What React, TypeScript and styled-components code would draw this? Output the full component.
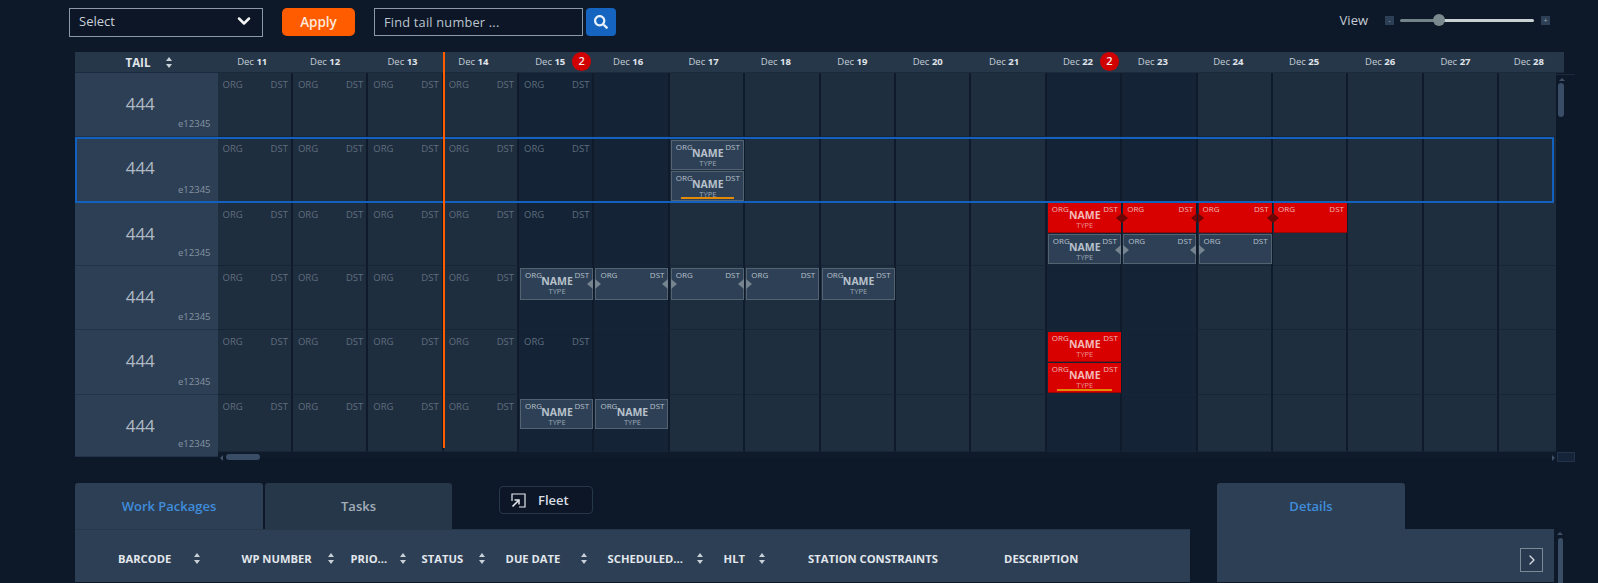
import React from "react";
import styled, { createGlobalStyle } from "styled-components";
import { ChevronDown, ChevronRight } from "lucide-react";
import { FaSearch } from "react-icons/fa";

const GlobalStyle = createGlobalStyle`
    html, body {
        margin: 0;
        padding: 0;
        background: #0d1829;
        overflow: hidden;
    }
    * {
        box-sizing: border-box;
    }
`;

const Page = styled.div`
    width: 1598px;
    height: 583px;
    overflow: hidden;
    background: #0d1829;
    font-family: "Open Sans", "Noto Sans", sans-serif;
    color: #e4e9ee;
`;

const TopBar = styled.div`
    display: flex;
    align-items: flex-start;
    height: 29px;
    margin-top: 8px;
    padding-left: 69px;
`;

const SelectBox = styled.div`
    width: 194px;
    height: 29px;
    display: flex;
    align-items: center;
    justify-content: space-between;
    padding: 0 8px 3px 9px;
    border: 1px solid #8b98a5;
    background: #0c1626;
    font-size: 13px;
    color: #c8d0d8;
`;

const ApplyButton = styled.button`
    width: 73px;
    height: 28px;
    margin-left: 19px;
    border: none;
    border-radius: 5px;
    background: #ff5c00;
    color: #ffe9dc;
    font-family: inherit;
    font-size: 13.5px;
    font-weight: 600;
`;

const SearchInput = styled.div`
    width: 209px;
    height: 28px;
    margin-left: 19px;
    display: flex;
    align-items: center;
    padding-left: 9px;
    border: 1px solid #8b98a5;
    background: #0c1626;
    font-size: 12.8px;
    color: #bcc5ce;
    letter-spacing: 0.2px;
`;

const SearchButton = styled.button`
    width: 30px;
    height: 28px;
    margin-left: 3px;
    border: none;
    border-radius: 4px;
    background: #1565c0;
    color: #e8f1fb;
    display: flex;
    align-items: center;
    justify-content: center;
`;

const ViewControl = styled.div`
    display: flex;
    align-items: center;
    height: 24px;
    margin-left: auto;
    padding-right: 48px;
    font-size: 13px;
    color: #c3ccd4;
`;

const ZoomStep = styled.span<{ $gap: number }>`
    width: 9px;
    height: 9px;
    margin-left: ${(p) => p.$gap}px;
    background: #2d3f55;
    color: #8d9aa6;
    font-size: 8px;
    line-height: 8px;
    text-align: center;
`;

const Slider = styled.div`
    position: relative;
    width: 134px;
    height: 3px;
    margin-left: 6px;
    border-radius: 2px;
    background: linear-gradient(to right, #72838a 29%, #c9d2d2 29%);
`;

const SliderThumb = styled.span`
    position: absolute;
    left: 33px;
    top: -5px;
    width: 12px;
    height: 12px;
    border-radius: 50%;
    background: #79898d;
`;

const Board = styled.div`
    position: relative;
    width: 1500px;
    margin: 15px 0 0 75px;
`;

const TimeLine = styled.span`
    position: absolute;
    left: 368px;
    top: 0;
    width: 2px;
    height: 396px;
    background: #ff5c00;
    z-index: 3;
`;

const DateHeader = styled.div`
    display: flex;
    width: 1489px;
    height: 21px;
    overflow: hidden;
    background: #26374a;
    border-bottom: 1px solid #1b2a3c;
`;

const TailHead = styled.div`
    flex: none;
    width: 142.5px;
    display: flex;
    align-items: center;
    padding-left: 50.5px;
    font-size: 11.5px;
    font-weight: 700;
    color: #e0e5ea;
`;

const TailSort = styled.span`
    display: flex;
    margin-left: 16px;
`;

const DayHead = styled.div<{ $nudge: number }>`
    position: relative;
    flex: none;
    width: 75.4px;
    padding-right: ${(p) => p.$nudge}px;
    line-height: 20px;
    text-align: center;
    font-size: 9.5px;
    color: #c5ced6;

    b {
        font-weight: 700;
        color: #e0e5ea;
    }
`;

const Badge = styled.span`
    position: absolute;
    left: 53px;
    top: 0;
    width: 19px;
    height: 19px;
    border-radius: 50%;
    background: #d00000;
    color: #fbe9e9;
    font-size: 11px;
    font-weight: 600;
    line-height: 18px;
    text-align: center;
`;

const BoardBody = styled.div`
    display: flex;
`;

const Rows = styled.div`
    width: 1481px;
`;

const Row = styled.div<{ $height: number }>`
    position: relative;
    display: flex;
    align-items: flex-start;
    height: ${(p) => p.$height}px;
    overflow: hidden;
    background: #0f1a2a;
`;

const SelectedFrame = styled.span`
    position: absolute;
    left: 0;
    right: 2px;
    top: 0;
    bottom: 0;
    border: 2px solid #1261bf;
    z-index: 2;
    pointer-events: none;
`;

const TailCell = styled.div`
    flex: none;
    position: relative;
    width: 142.5px;
    height: 100%;
    background: #2d3f55;
    border-bottom: 1px solid #22324a;
`;

const TailNumber = styled.div`
    padding-top: 20px;
    padding-right: 12px;
    text-align: center;
    font-size: 17px;
    line-height: 22px;
    color: #b0bac3;
`;

const TailCode = styled.div`
    position: absolute;
    right: 7px;
    bottom: 6px;
    font-size: 9.5px;
    line-height: 12px;
    color: #8593a1;
`;

const DayCell = styled.div<{ $dark: boolean; $top: number; $short?: boolean }>`
    flex: none;
    width: 75.4px;
    height: ${(p) => (p.$short ? "57px" : "100%")};
    padding: ${(p) => p.$top}px 0 0 1px;
    border-right: 2px solid #0f1a2a;
    border-bottom: 1px solid #172537;
    background: ${(p) => (p.$dark ? "#142336" : "#1f2e3f")};
`;

const RouteRow = styled.div`
    display: flex;
    justify-content: space-between;
    padding: 6px 3px 0 4px;
    font-size: 9.5px;
    line-height: 12px;
    color: #5f6d7d;
`;

const EventBox = styled.div<{ $red?: boolean; $height: number }>`
    position: relative;
    width: 73px;
    height: ${(p) => p.$height}px;
    margin-bottom: 0.5px;
    padding: 1px 2px 0 3px;
    text-align: center;
    background: ${(p) => (p.$red ? "#d90000" : "#2e4056")};
    border: ${(p) => (p.$red ? "none" : "1px solid #546372")};
    border-bottom: ${(p) => (p.$red ? "1px solid #9c0505" : "1px solid #546372")};
    color: ${(p) => (p.$red ? "#f2b9b9" : "#b7c1cb")};
`;

const EventRoute = styled.div`
    display: flex;
    justify-content: space-between;
    padding: 0 1px;
    font-size: 8px;
    line-height: 10px;
`;

const EventName = styled.div`
    margin-top: -4px;
    font-size: 10.5px;
    font-weight: 700;
    line-height: 11px;
`;

const EventType = styled.div`
    font-size: 7.5px;
    line-height: 8px;
    opacity: 0.8;
`;

const EventBar = styled.span`
    position: absolute;
    left: 9px;
    right: 9px;
    bottom: 1px;
    height: 2px;
    background: #e28a06;
`;

const Arrow = styled.span<{ $side: "left" | "right"; $red?: boolean }>`
    position: absolute;
    top: 10px;
    width: 0;
    height: 0;
    border-top: 5px solid transparent;
    border-bottom: 5px solid transparent;
    ${(p) =>
        p.$side === "left"
            ? `left: -1px; border-left: 6px solid ${p.$red ? "#6e0505" : "#76848f"};`
            : `right: -1px; border-right: 6px solid ${p.$red ? "#6e0505" : "#76848f"};`}
`;

const VScroll = styled.div`
    position: relative;
    width: 19px;
    margin-top: 1px;
    border-top: 1px solid #1b2a3c;
`;

const ScrollThumbV = styled.span`
    position: absolute;
    left: 2px;
    top: 8px;
    width: 6px;
    height: 34px;
    border-radius: 3px;
    background: #3a4d66;
`;

const ScrollCapUp = styled.span`
    position: absolute;
    left: 3px;
    top: 3px;
    border-left: 3px solid transparent;
    border-right: 3px solid transparent;
    border-bottom: 3px solid #3f5068;
`;

const ScrollCapDown = styled.span`
    position: absolute;
    left: 3px;
    bottom: 2px;
    border-left: 3px solid transparent;
    border-right: 3px solid transparent;
    border-top: 3px solid #3f5068;
`;

const HScroll = styled.div`
    position: relative;
    height: 11px;
    width: 1339px;
    margin: -5px 0 0 142.5px;
`;

const ScrollCapLeft = styled.span`
    position: absolute;
    left: 2px;
    top: 3px;
    border-top: 3px solid transparent;
    border-bottom: 3px solid transparent;
    border-right: 3px solid #3f5068;
`;

const ScrollThumbH = styled.span`
    position: absolute;
    left: 8px;
    top: 2px;
    width: 34px;
    height: 6px;
    border-radius: 3px;
    background: #3a4d66;
`;

const ScrollCapRight = styled.span`
    position: absolute;
    right: 2px;
    top: 3px;
    border-top: 3px solid transparent;
    border-bottom: 3px solid transparent;
    border-left: 3px solid #3f5068;
`;

const ScrollCorner = styled.span`
    position: absolute;
    right: -18px;
    top: 0;
    width: 18px;
    height: 10px;
    background: #16243a;
    box-shadow: inset 0 0 0 1px #22334a;
`;

const Lower = styled.div`
    display: flex;
    align-items: flex-start;
    margin-top: 20px;
    padding-left: 75px;
`;

const WorkArea = styled.div`
    position: relative;
    width: 1115px;
`;

const TabRow = styled.div`
    display: flex;
    gap: 2px;
    align-items: flex-start;
    height: 46px;
`;

const Tab = styled.div<{ $active?: boolean; $width: number }>`
    width: ${(p) => p.$width}px;
    height: 46px;
    border-radius: 3px 3px 0 0;
    background: ${(p) => (p.$active ? "#2d3f55" : "#26374a")};
    color: ${(p) => (p.$active ? "#3f8ddb" : "#a3aeb9")};
    font-size: 13px;
    font-weight: 600;
    line-height: 46px;
    text-align: center;
`;

const FleetButton = styled.div`
    display: flex;
    align-items: center;
    width: 94px;
    height: 28px;
    margin: 3px 0 0 45px;
    padding-left: 11px;
    gap: 12px;
    border: 1px solid #26374a;
    border-radius: 4px;
    background: #0c1626;
    color: #d8dee4;
    font-size: 13px;
    font-weight: 600;
`;

const TablePanel = styled.div`
    height: 53px;
    display: flex;
    padding: 20px 0 0 43px;
    background: #2d3f55;
    border-top: 1px solid #26374a;
`;

const HeadCell = styled.div<{ $width: number }>`
    flex: none;
    display: flex;
    align-items: center;
    width: ${(p) => p.$width}px;
    height: 16px;
    font-size: 11.2px;
    font-weight: 700;
    color: #e2e7ec;
    white-space: nowrap;
`;

const HeadLabel = styled.span<{ $width?: number }>`
    display: block;
    width: ${(p) => (p.$width ? `${p.$width}px` : "auto")};
`;

const DetailsArea = styled.div`
    width: 337px;
    margin-left: 27px;
`;

const DetailsPanel = styled.div`
    height: 53px;
    display: flex;
    justify-content: flex-end;
    padding: 19px 11px 0 0;
    background: #2d3f55;
`;

const CollapseButton = styled.button`
    width: 23px;
    height: 24px;
    padding: 0;
    display: flex;
    align-items: center;
    justify-content: center;
    border: 1px solid #7c8a98;
    background: #293a50;
    color: #d5dbe1;
`;

const DetailsScroll = styled.div`
    position: relative;
    width: 12px;
    margin-top: 46px;
`;

const DetailsThumb = styled.span`
    position: absolute;
    left: 4px;
    top: 9px;
    width: 5px;
    height: 60px;
    border-radius: 3px;
    background: #3a4d66;
`;

const SortIcon = ({ color = "#c9d1d8" }: { color?: string }) => (
    <svg width="6" height="11" viewBox="0 0 6 11" fill={color}>
        <path d="M3 0 L6 4 H0 Z" />
        <path d="M3 11 L0 7 H6 Z" />
    </svg>
);

const FleetIcon = () => (
    <svg width="15" height="15" viewBox="0 0 15 15" fill="none" stroke="#e8ecf0" strokeWidth="1.2">
        <path d="M1 8 V1 H14 V14 H8" />
        <path d="M1.5 13.5 L7.5 7.5" strokeWidth="1.6" />
        <path d="M3.5 7 H8 V11.5" strokeWidth="1.5" />
    </svg>
);

type EventItem = {
    red?: boolean;
    named?: boolean;
    left?: boolean;
    right?: boolean;
    bar?: boolean;
};

const days = [
    { day: 11, nudge: 6 },
    { day: 12, nudge: 11 },
    { day: 13, nudge: 7 },
    { day: 14, nudge: 16 },
    { day: 15, nudge: 13, badge: 2 },
    { day: 16, nudge: 8 },
    { day: 17, nudge: 8 },
    { day: 18, nudge: 14 },
    { day: 19, nudge: 12 },
    { day: 20, nudge: 12 },
    { day: 21, nudge: 10 },
    { day: 22, nudge: 13, badge: 2 },
    { day: 23, nudge: 14 },
    { day: 24, nudge: 14 },
    { day: 25, nudge: 13 },
    { day: 26, nudge: 12 },
    { day: 27, nudge: 12 },
    { day: 28, nudge: 16 },
];

const rows: {
    height: number;
    top: number;
    boxHeight?: number;
    selected?: boolean;
    events: Record<number, EventItem[]>;
}[] = [
    { height: 64, top: 0, events: {} },
    {
        height: 66,
        top: 3,
        selected: true,
        events: { 17: [{ named: true }, { named: true, bar: true }] },
    },
    {
        height: 63.2,
        top: 0,
        events: {
            22: [{ red: true, named: true, right: true }, { named: true, right: true }],
            23: [{ red: true, left: true, right: true }, { left: true, right: true }],
            24: [{ red: true, left: true, right: true }, { left: true }],
            25: [{ red: true, left: true }],
        },
    },
    {
        height: 64.2,
        top: 2,
        boxHeight: 32,
        events: {
            15: [{ named: true, right: true }],
            16: [{ left: true, right: true }],
            17: [{ left: true, right: true }],
            18: [{ left: true }],
            19: [{ named: true }],
        },
    },
    {
        height: 64.2,
        top: 2,
        events: { 22: [{ red: true, named: true }, { red: true, named: true, bar: true }] },
    },
    {
        height: 62.5,
        top: 4,
        events: { 15: [{ named: true }], 16: [{ named: true }] },
    },
];

const columns = [
    { label: "BARCODE", width: 123.6, labelWidth: 76 },
    { label: "WP NUMBER", width: 109, labelWidth: 86 },
    { label: "PRIO...", width: 71, labelWidth: 49 },
    { label: "STATUS", width: 84, labelWidth: 57 },
    { label: "DUE DATE", width: 102, labelWidth: 75 },
    { label: "SCHEDULED...", width: 116, labelWidth: 89 },
    { label: "HLT", width: 84.5, labelWidth: 35 },
    { label: "STATION CONSTRAINTS", width: 196 },
    { label: "DESCRIPTION", width: 90 },
];

const Event = ({ item, height }: { item: EventItem; height: number }) => (
    <EventBox $red={item.red} $height={height}>
        <EventRoute>
            <span>ORG</span>
            <span>DST</span>
        </EventRoute>
        {item.named && (
            <>
                <EventName>NAME</EventName>
                <EventType>TYPE</EventType>
            </>
        )}
        {item.left && <Arrow $side="left" $red={item.red} />}
        {item.right && <Arrow $side="right" $red={item.red} />}
        {item.bar && <EventBar />}
    </EventBox>
);

const App = () => {
    return (
        <Page>
            <GlobalStyle />
            <TopBar>
                <SelectBox>
                    Select
                    <ChevronDown size={20} strokeWidth={3} color="#f2f4f6" />
                </SelectBox>
                <ApplyButton>Apply</ApplyButton>
                <SearchInput>Find tail number ...</SearchInput>
                <SearchButton>
                    <FaSearch size={14} />
                </SearchButton>
                <ViewControl>
                    View
                    <ZoomStep $gap={17}>-</ZoomStep>
                    <Slider>
                        <SliderThumb />
                    </Slider>
                    <ZoomStep $gap={7}>+</ZoomStep>
                </ViewControl>
            </TopBar>

            <Board>
                <TimeLine />
                <DateHeader>
                    <TailHead>
                        TAIL
                        <TailSort>
                            <SortIcon />
                        </TailSort>
                    </TailHead>
                    {days.map((d) => (
                        <DayHead key={d.day} $nudge={d.nudge}>
                            Dec <b>{d.day}</b>
                            {d.badge && <Badge>{d.badge}</Badge>}
                        </DayHead>
                    ))}
                </DateHeader>
                <BoardBody>
                    <Rows>
                        {rows.map((row, i) => (
                            <Row key={i} $height={row.height}>
                                {row.selected && <SelectedFrame />}
                                <TailCell>
                                    <TailNumber>444</TailNumber>
                                    <TailCode>e12345</TailCode>
                                </TailCell>
                                {days.map((d) => (
                                    <DayCell
                                        key={d.day}
                                        $dark={[15, 16, 22, 23].includes(d.day)}
                                        $top={d.day <= 15 && !row.events[d.day] ? 0 : row.top}
                                        $short={i === rows.length - 1}
                                    >
                                        {d.day <= 15 && !row.events[d.day] && (
                                            <RouteRow>
                                                <span>ORG</span>
                                                <span>DST</span>
                                            </RouteRow>
                                        )}
                                        {(row.events[d.day] || []).map((item, n) => (
                                            <Event key={n} item={item} height={row.boxHeight || 30} />
                                        ))}
                                    </DayCell>
                                ))}
                            </Row>
                        ))}
                    </Rows>
                    <VScroll>
                        <ScrollCapUp />
                        <ScrollThumbV />
                        <ScrollCapDown />
                    </VScroll>
                </BoardBody>
                <HScroll>
                    <ScrollCapLeft />
                    <ScrollThumbH />
                    <ScrollCapRight />
                    <ScrollCorner />
                </HScroll>
            </Board>

            <Lower>
                <WorkArea>
                    <TabRow>
                        <Tab $active $width={188}>Work Packages</Tab>
                        <Tab $width={187}>Tasks</Tab>
                        <FleetButton>
                            <FleetIcon />
                            Fleet
                        </FleetButton>
                    </TabRow>
                    <TablePanel>
                        {columns.map((c) => (
                            <HeadCell key={c.label} $width={c.width}>
                                <HeadLabel $width={c.labelWidth}>{c.label}</HeadLabel>
                                {c.labelWidth && <SortIcon />}
                            </HeadCell>
                        ))}
                    </TablePanel>
                </WorkArea>
                <DetailsArea>
                    <TabRow>
                        <Tab $active $width={188}>Details</Tab>
                    </TabRow>
                    <DetailsPanel>
                        <CollapseButton>
                            <ChevronRight size={16} strokeWidth={2} />
                        </CollapseButton>
                    </DetailsPanel>
                </DetailsArea>
                <DetailsScroll>
                    <ScrollCapUp />
                    <DetailsThumb />
                </DetailsScroll>
            </Lower>
        </Page>
    );
};

export default App;
